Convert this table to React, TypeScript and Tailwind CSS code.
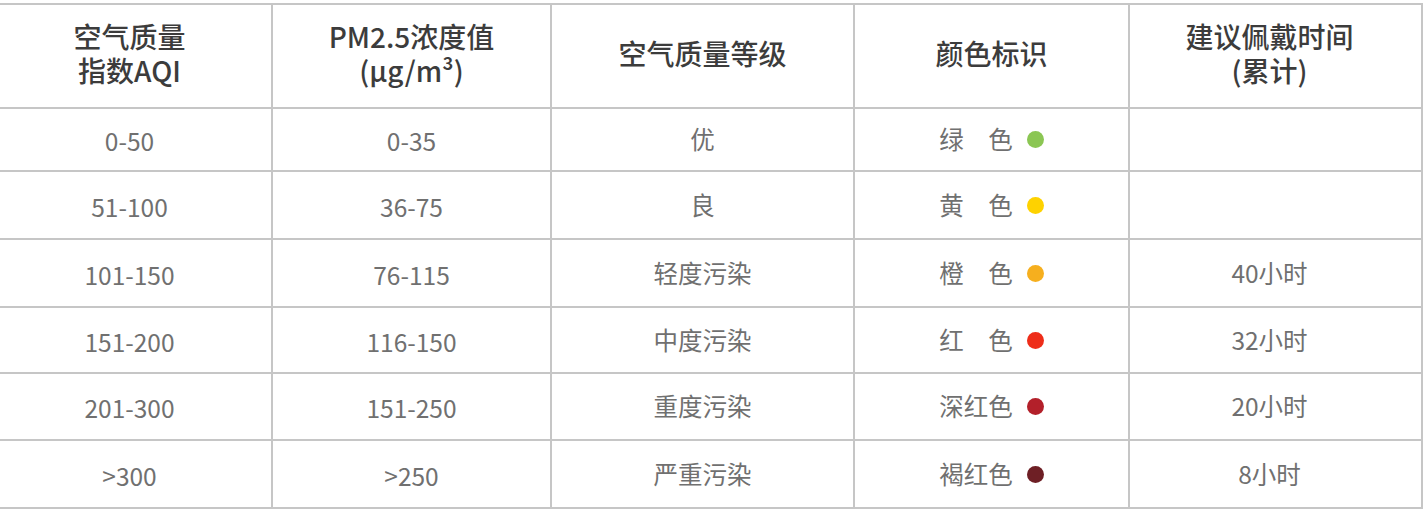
const rows = [
  { aqi: "0-50", pm: "0-35", level: "优", color: "绿　色", dot: "bg-[#8bc653]", time: "", h: "h-[63px]" },
  { aqi: "51-100", pm: "36-75", level: "良", color: "黄　色", dot: "bg-[#fed200]", time: "", h: "h-[68px]" },
  { aqi: "101-150", pm: "76-115", level: "轻度污染", color: "橙　色", dot: "bg-[#f6af1e]", time: "40小时", h: "h-[68px]" },
  { aqi: "151-200", pm: "116-150", level: "中度污染", color: "红　色", dot: "bg-[#ee2d19]", time: "32小时", h: "h-[66px]" },
  { aqi: "201-300", pm: "151-250", level: "重度污染", color: "深红色", dot: "bg-[#b3202a]", time: "20小时", h: "h-[67px]" },
  { aqi: ">300", pm: ">250", level: "严重污染", color: "褐红色", dot: "bg-[#6e1f25]", time: "8小时", h: "h-[68px]" },
];

const cols = "grid grid-cols-[273px_279px_303px_275px_1fr]";
const cell = "flex items-center justify-center border-r-2 border-b-2 border-[#c6c6c6] text-center";

export default function App() {
  return (
    <div className="w-[1423px] h-[515px] bg-white pt-[3px] font-['Noto_Sans_CJK_SC','Noto_Sans',sans-serif]">
      <div className="border-t-2 border-[#c6c6c6]">
        <div className={`${cols} h-[104px] text-[28px] leading-[34px] font-medium text-[#3c3c3c]`}>
          <div className={`${cell} pr-[12px] pb-[6px]`}>
            <p>
              空气质量
              <br />
              指数AQI
            </p>
          </div>
          <div className={`${cell} pb-[6px]`}>
            <p>
              PM2.5浓度值
              <br />
              (μg/m³)
            </p>
          </div>
          <div className={`${cell} pb-[6px]`}>
            <p>空气质量等级</p>
          </div>
          <div className={`${cell} pb-[6px]`}>
            <p>颜色标识</p>
          </div>
          <div className={`${cell} border-r-0 pr-[12px] pb-[6px]`}>
            <p>
              建议佩戴时间
              <br />
              (累计)
            </p>
          </div>
        </div>

        {rows.map((r) => (
          <div key={r.aqi} className={`${cols} ${r.h} text-[24.5px] text-[#707070]`}>
            <div className={`${cell} pr-[12px]`}>
              <span className="pt-[4px]">{r.aqi}</span>
            </div>
            <div className={cell}>
              <span className="pt-[4px]">{r.pm}</span>
            </div>
            <div className={cell}>
              <span>{r.level}</span>
            </div>
            <div className={cell}>
              <span className="flex items-center">
                <span>{r.color}</span>
                <span className={`ml-[14px] w-[17px] h-[17px] rounded-full ${r.dot}`} />
              </span>
            </div>
            <div className={`${cell} border-r-0 pr-[12px]`}>
              <span>{r.time}</span>
            </div>
          </div>
        ))}
      </div>
    </div>
  );
}
